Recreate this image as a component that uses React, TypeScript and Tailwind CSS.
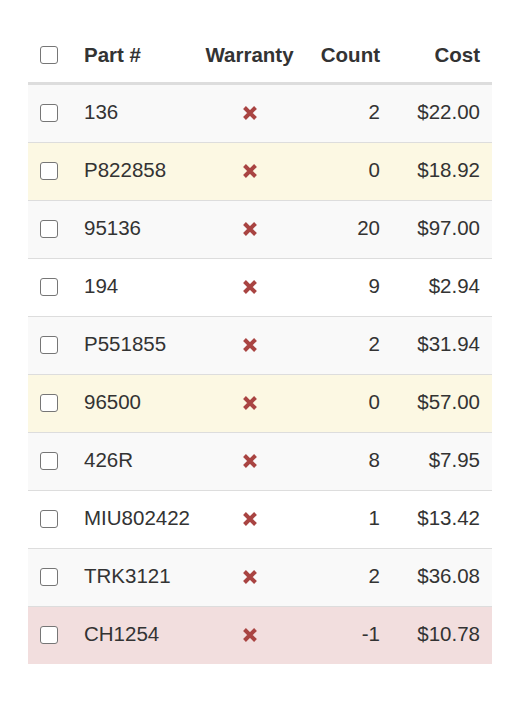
import React from "react";

type Row = { part: string; count: string; cost: string; bg: string };

const rows: Row[] = [
  { part: "136", count: "2", cost: "$22.00", bg: "bg-[#f9f9f9]" },
  { part: "P822858", count: "0", cost: "$18.92", bg: "bg-[#fcf8e3]" },
  { part: "95136", count: "20", cost: "$97.00", bg: "bg-[#f9f9f9]" },
  { part: "194", count: "9", cost: "$2.94", bg: "bg-white" },
  { part: "P551855", count: "2", cost: "$31.94", bg: "bg-[#f9f9f9]" },
  { part: "96500", count: "0", cost: "$57.00", bg: "bg-[#fcf8e3]" },
  { part: "426R", count: "8", cost: "$7.95", bg: "bg-[#f9f9f9]" },
  { part: "MIU802422", count: "1", cost: "$13.42", bg: "bg-white" },
  { part: "TRK3121", count: "2", cost: "$36.08", bg: "bg-[#f9f9f9]" },
  { part: "CH1254", count: "-1", cost: "$10.78", bg: "bg-[#f2dede]" },
];

function Box() {
  return (
    <div className="w-[18px] h-[18px] rounded-[3px] border border-[#767676] bg-white" />
  );
}

function RemoveIcon() {
  return (
    <svg width="14" height="14" viewBox="0 0 14 14" className="block">
      <path d="M1.5 1.5 L12.5 12.5 M12.5 1.5 L1.5 12.5" stroke="#a94442" strokeWidth="4" />
    </svg>
  );
}

const cols = "grid grid-cols-[44px_121px_113px_86px_100px]";

export default function App() {
  return (
    <div className="bg-white w-[522px] h-[708px] pt-[28px] pl-[28px] text-[#333] text-[20.5px] font-['Liberation_Sans',Arial,Helvetica,sans-serif]">
      <div className="w-[464px]">
        <div className={`${cols} h-[57px] items-center border-b-[3px] border-[#ddd] font-bold`}>
          <div className="px-3 flex items-center pb-[1px]">
            <Box />
          </div>
          <div className="px-3">Part #</div>
          <div className="px-3 text-center">Warranty</div>
          <div className="px-3 text-right">Count</div>
          <div className="px-3 text-right">Cost</div>
        </div>
        {rows.map((r, i) => (
          <div
            key={i}
            className={`${cols} items-center pb-[2px] ${r.bg} ${
              i === 0 ? "h-[57px]" : "h-[58px] border-t border-[#ddd]"
            }`}
          >
            <div className="px-3 flex items-center">
              <Box />
            </div>
            <div className="px-3 whitespace-nowrap">{r.part}</div>
            <div className="px-3 flex justify-center">
              <RemoveIcon />
            </div>
            <div className="px-3 text-right">{r.count}</div>
            <div className="px-3 text-right">{r.cost}</div>
          </div>
        ))}
      </div>
    </div>
  );
}
